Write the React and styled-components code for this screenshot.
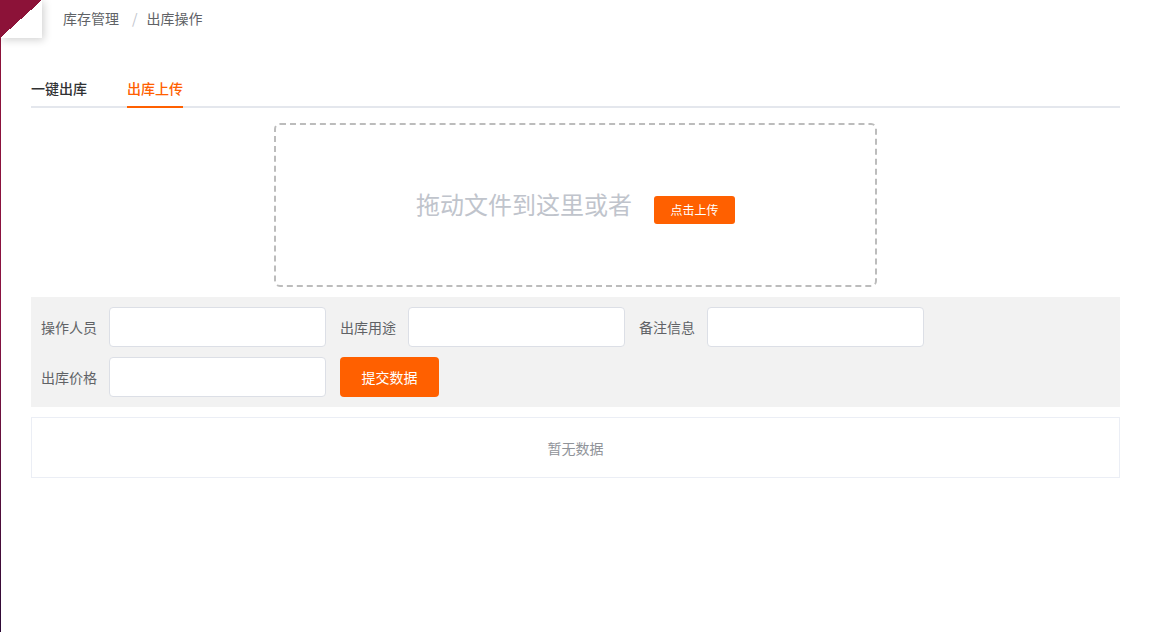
import { useState } from "react";
import styled, { createGlobalStyle } from "styled-components";

const GlobalStyle = createGlobalStyle`
  * { box-sizing: border-box; }
  body {
    margin: 0;
    font-family: "Noto Sans CJK SC", "Noto Sans", "Liberation Sans", sans-serif;
    background: #fff;
  }
`;

const fields = [
  { label: "操作人员" },
  { label: "出库用途" },
  { label: "备注信息" },
  { label: "出库价格" },
];

const App = () => {
  const [activeTab, setActiveTab] = useState(1);

  return (
    <Shell>
      <GlobalStyle />
      <Header>
        <Corner />
        <Breadcrumb>
          <Crumb>库存管理</Crumb>
          <Sep>/</Sep>
          <Crumb>出库操作</Crumb>
        </Breadcrumb>
      </Header>
      <Main>
        <TabBar>
          {["一键出库", "出库上传"].map((t, i) => (
            <Tab key={t} $active={activeTab === i} onClick={() => setActiveTab(i)}>
              {t}
            </Tab>
          ))}
        </TabBar>
        <UploadBox>
          <DropText>拖动文件到这里或者</DropText>
          <SmallButton>点击上传</SmallButton>
        </UploadBox>
        <FormPanel>
          {fields.map(({ label }) => (
            <Field key={label}>
              <Label>{label}</Label>
              <Input />
            </Field>
          ))}
          <SubmitButton>提交数据</SubmitButton>
        </FormPanel>
        <EmptyTable>暂无数据</EmptyTable>
      </Main>
    </Shell>
  );
};

const Shell = styled.div`
  min-height: 100vh;
  background: linear-gradient(#8c1238, #8a1342 50%, #2c0a36) left top / 1px 100% no-repeat, #fff;
`;

const Header = styled.div`
  display: flex;
  align-items: center;
  height: 38px;
`;

const Corner = styled.div`
  width: 42px;
  height: 38px;
  background: linear-gradient(to bottom right, #8c1238 50%, #fff 50%);
  box-shadow: 2px 2px 8px rgba(0, 0, 0, 0.18);
`;

const Breadcrumb = styled.div`
  display: flex;
  align-items: center;
  margin-left: 21px;
  margin-top: -2px;
  font-size: 14px;
  color: #606266;
`;

const Crumb = styled.span``;

const Sep = styled.span`
  margin: 0 9px 0 13px;
  color: #c0c4cc;
`;

const Main = styled.div`
  padding: 30px 29px 0 31px;
`;

const TabBar = styled.div`
  display: flex;
  height: 40px;
  border-bottom: 2px solid #e4e7ed;
  margin-bottom: 15px;
`;

const Tab = styled.div`
  position: relative;
  padding: 0 20px;
  line-height: 40px;
  font-size: 14px;
  font-weight: 500;
  color: ${({ $active }) => ($active ? "#ff6000" : "#303133")};
  cursor: pointer;

  &:first-child {
    padding-left: 0;
  }

  &::after {
    content: "";
    position: absolute;
    left: 20px;
    right: 20px;
    bottom: -2px;
    height: 2px;
    background: ${({ $active }) => ($active ? "#ff6000" : "transparent")};
  }
  &:first-child::after {
    left: 0;
  }
`;

const UploadBox = styled.div`
  width: 603px;
  height: 164px;
  margin: 0 auto;
  border: 2px dashed #bcbcbc;
  border-radius: 6px;
  display: flex;
  align-items: center;
  justify-content: center;
  gap: 22px;
`;

const DropText = styled.span`
  font-size: 24px;
  color: #c0c4cc;
  margin-top: -4px;
`;

const SmallButton = styled.button`
  width: 81px;
  height: 28px;
  border: none;
  border-radius: 3px;
  background: #ff6000;
  color: #fff;
  font-size: 12px;
  font-family: inherit;
  margin-top: 9px;
`;

const FormPanel = styled.div`
  margin-top: 10px;
  padding: 10px;
  background: #f2f2f2;
  display: flex;
  flex-wrap: wrap;
  gap: 10px 14px;
  padding-right: 0;
`;

const Field = styled.div`
  display: flex;
  align-items: center;
`;

const Label = styled.label`
  width: 68px;
  font-size: 14px;
  color: #606266;
`;

const Input = styled.input`
  width: 217px;
  height: 40px;
  border: 1px solid #dcdfe6;
  border-radius: 4px;
  background: #fff;
  outline: none;
`;

const SubmitButton = styled.button`
  width: 99px;
  height: 40px;
  border: none;
  border-radius: 4px;
  background: #ff6000;
  color: #fff;
  font-size: 14px;
  font-family: inherit;
`;

const EmptyTable = styled.div`
  margin-top: 10px;
  height: 61px;
  border: 1px solid #ebeef5;
  display: flex;
  align-items: center;
  justify-content: center;
  font-size: 14px;
  color: #909399;
`;

export default App;
